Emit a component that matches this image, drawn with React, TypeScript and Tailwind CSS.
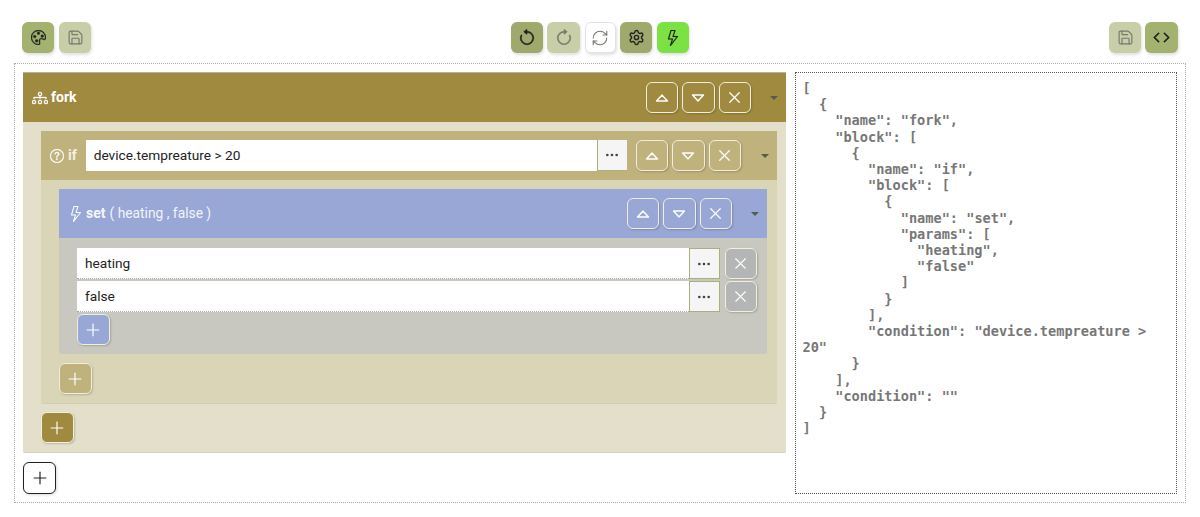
import React from 'react';
import { Save, Settings, RefreshCw, Plus, X, Ellipsis } from 'lucide-react';
import { BsPalette, BsArrowCounterclockwise, BsArrowClockwise, BsLightning, BsDiagram3, BsQuestionCircle, BsCode } from 'react-icons/bs';

const json = `[
  {
    "name": "fork",
    "block": [
      {
        "name": "if",
        "block": [
          {
            "name": "set",
            "params": [
              "heating",
              "false"
            ]
          }
        ],
        "condition": "device.tempreature > 20"
      }
    ],
    "condition": ""
  }
]`;

const Caret = ({ down }: { down?: boolean }) => (
  <svg width="18" height="10" viewBox="0 0 18 10" fill="none" stroke="currentColor" strokeWidth="1.4" strokeLinejoin="round">
    {down ? <path d="M3.5 2h11L9 8z" /> : <path d="M3.5 8h11L9 2z" />}
  </svg>
);

const Toolbtn = ({ bg, icon, faded, w = 'w-[32px]' }: { bg: string; icon: React.ReactNode; faded?: boolean; w?: string }) => (
  <button className={`${w} h-[31px] rounded-md flex items-center justify-center shadow-[1px_2px_3px_rgba(0,0,0,0.12)] ${bg} ${faded ? 'text-[#77786e]' : 'text-[#222]'}`}>
    {icon}
  </button>
);

const HeadBtn = ({ children, bg }: { children: React.ReactNode; bg: string }) => (
  <button className={`w-[32.5px] h-[31px] rounded-md border border-[#f1eedd] text-white flex items-center justify-center shadow-[1px_1px_2px_rgba(0,0,0,0.18)] ${bg}`}>
    {children}
  </button>
);

const Moves = ({ bg }: { bg: string }) => (
  <div className="flex items-center gap-[4px]">
    <HeadBtn bg={bg}><Caret /></HeadBtn>
    <HeadBtn bg={bg}><Caret down /></HeadBtn>
    <HeadBtn bg={bg}><X size={19} strokeWidth={1.6} /></HeadBtn>
  </div>
);

const Fold = () => (
  <div className="w-0 h-0 border-x-[4px] border-x-transparent border-t-[4px] border-t-[#5a5a4a]" />
);

const Dots = ({ olive, w }: { olive?: boolean; w: string }) => (
  <button className={`${w} h-[31px] shrink-0 bg-[#f5f5f5] text-[#444] flex items-center justify-center border-l border-b ${olive ? 'border-t border-r border-[#a9b07a]' : 'border-[#a9b07a]'}`}>
    <Ellipsis size={16} strokeWidth={2} />
  </button>
);

const Param = ({ value }: { value: string }) => (
  <div className="flex items-center gap-[5px]">
    <div className="flex-1 flex">
      <div className="flex-1 h-[31px] bg-white pl-[8px] pt-[1px] flex items-center text-[13.7px] text-[#222] border-b border-dotted border-[#aaa]">{value}</div>
      <Dots olive w="w-[31px]" />
    </div>
    <HeadBtn bg="bg-[#b4b6b5]"><X size={19} strokeWidth={1.4} /></HeadBtn>
  </div>
);

const AddBtn = ({ bg }: { bg: string }) => (
  <HeadBtn bg={bg}><Plus size={20} strokeWidth={1.4} /></HeadBtn>
);

export default function App() {
  return (
    <div className="w-[1200px] h-[517px] bg-white font-['Roboto',sans-serif] overflow-hidden">
      {/* toolbar */}
      <div className="h-[63px] pt-[22px] pl-[22px] pr-[22px] flex justify-between">
        <div className="flex gap-[5px] w-[99px]">
          <Toolbtn bg="bg-[#a4b26f]" icon={<BsPalette size={15} strokeWidth={0.4} />} />
          <Toolbtn bg="bg-[#c8cfa8]" faded icon={<Save size={17} strokeWidth={1.6} />} />
        </div>
        <div className="flex gap-[4.5px]">
          <Toolbtn bg="bg-[#a0a96c]" icon={<BsArrowCounterclockwise size={18} strokeWidth={0.5} />} />
          <Toolbtn w="w-[33px]" bg="bg-[#c8cfa8]" faded icon={<BsArrowClockwise size={18} strokeWidth={0.4} />} />
          <Toolbtn w="w-[31px]" bg="bg-white border border-[#e2e2ea]" faded icon={<RefreshCw size={18} strokeWidth={1.5} />} />
          <Toolbtn bg="bg-[#a0a96c]" icon={<Settings size={17} strokeWidth={2} />} />
          <Toolbtn bg="bg-[#7ce244]" icon={<BsLightning size={16} strokeWidth={0.2} />} />
        </div>
        <div className="flex gap-[4px] w-[100px] justify-end">
          <Toolbtn bg="bg-[#c8cfa8]" faded icon={<Save size={17} strokeWidth={1.6} />} />
          <Toolbtn w="w-[33px]" bg="bg-[#a4b26f]" icon={<BsCode size={19} strokeWidth={0.5} />} />
        </div>
      </div>

      {/* workspace */}
      <div className="mx-[14px] w-[1172px] h-[440px] border border-dotted border-[#aaa] p-[8px] flex gap-[9px]">
        <div className="w-[763px] shrink-0">
          {/* fork */}
          <div className="h-[381px] rounded-[2px] bg-[#e3dfca] border-b border-[#d2d0bf]">
            <div className="h-[50px] bg-[#9f8a3f] border-t border-[#b5b0a0] flex items-center pl-[9px] text-white">
              <BsDiagram3 size={16} strokeWidth={0.3} />
              <span className="ml-[3px] font-bold text-[14px]">fork</span>
              <div className="ml-auto flex items-center">
                <Moves bg="bg-[#9f8a3f]" />
                <div className="ml-[19px] mr-[8px]"><Fold /></div>
              </div>
            </div>
            <div className="pt-[9px] pl-[18px] pr-[9px]">
              {/* if */}
              <div className="h-[273px] rounded-[2px] bg-[#dbd5b8] border-b border-[#cfccb8]">
                <div className="h-[49px] bg-[#bfb27d] flex items-center pl-[9px] text-white">
                  <BsQuestionCircle size={14} strokeWidth={0.3} />
                  <span className="ml-[4px] font-bold text-[14px] text-[#f3f0e2]">if</span>
                  <div className="ml-[9px] w-[541px] flex">
                    <div className="flex-1 h-[31px] bg-white pl-[8px] flex items-center text-[13.7px] text-[#222]">device.tempreature &gt; 20</div>
                    <Dots w="w-[30px]" />
                  </div>
                  <div className="ml-[9px] flex items-center">
                    <Moves bg="bg-[#bfb27d]" />
                    <div className="ml-[20px]"><Fold /></div>
                  </div>
                </div>
                <div className="pt-[9px] pl-[18px] pr-[10px]">
                  {/* set */}
                  <div className="h-[165px] rounded-[2px] bg-[#c8c8c0]">
                    <div className="h-[49px] bg-[#98a7d6] flex items-center pl-[9px] text-white">
                      <BsLightning size={16} />
                      <span className="ml-[2px] font-bold text-[14px] text-[#f4f5fb]">set</span>
                      <span className="ml-[4px] text-[13.8px] text-[#f1f3fa]">( heating , false )</span>
                      <div className="ml-auto flex items-center">
                        <Moves bg="bg-[#98a7d6]" />
                        <div className="ml-[19px] mr-[8px]"><Fold /></div>
                      </div>
                    </div>
                    <div className="pt-[10px] pl-[18px] pr-[10px] flex flex-col gap-[2px]">
                      <Param value="heating" />
                      <Param value="false" />
                      <AddBtn bg="bg-[#98a7d6]" />
                    </div>
                  </div>
                  <div className="mt-[9px]"><AddBtn bg="bg-[#bfb27d]" /></div>
                </div>
              </div>
              <div className="mt-[8px]"><AddBtn bg="bg-[#9f8a3f]" /></div>
            </div>
          </div>
          <div className="mt-[9px]">
            <button className="w-[33px] h-[32px] rounded-md border border-[#222] bg-white text-[#222] flex items-center justify-center shadow-[1px_1px_3px_rgba(0,0,0,0.15)]">
              <Plus size={20} strokeWidth={1.4} />
            </button>
          </div>
        </div>
        {/* json preview */}
        <pre className="w-[383px] h-[422px] border border-dotted border-[#555] pt-[7px] pl-[6.5px] pr-[2px] font-['DejaVu_Sans_Mono',monospace] font-bold text-[13.6px] leading-[16.2px] text-[#777] whitespace-pre-wrap break-words">{json}</pre>
      </div>
    </div>
  );
}
